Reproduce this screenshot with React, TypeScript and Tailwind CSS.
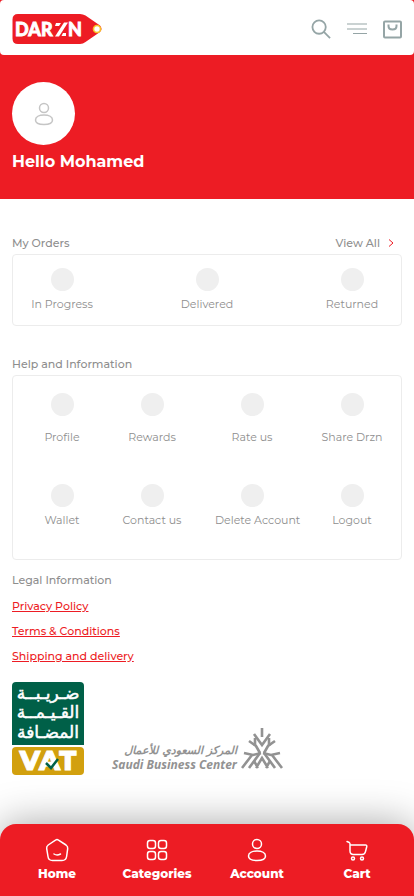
import React from "react";

const orders = ["In Progress", "Delivered", "Returned"];
const help = ["Profile", "Rewards", "Rate us", "Share Drzn"];
const account = ["Wallet", "Contact us", "Delete Account", "Logout"];
const legal = ["Privacy Policy", "Terms & Conditions", "Shipping and delivery"];

function Logo() {
  return (
    <svg width="91" height="31" viewBox="0 0 91 31" role="img" aria-label="Darzn">
      <path
        d="M6 0H68Q71 0 73.500 1.500L88 11.500Q91 15 88 18L73.500 28Q71 30 68 30H6Q0.500 30 0.500 24.500V5.500Q0.500 0 6 0Z"
        fill="#ed1c24"
      />
      <circle cx="85" cy="15" r="3.500" fill="#fff" stroke="#f8c325" strokeWidth="1.600" />
      <g fill="#fff" stroke="#fff" strokeWidth="0.800" fontFamily="Lato, sans-serif" fontWeight="900" fontSize="18">
        <text x="3" y="22">DAR</text>
        <text x="56" y="22">N</text>
      </g>
      <g fill="#fff">
        <path d="M44 9H49L47 12H43Z" />
        <path d="M52 8.500H56L47 22.500H43Z" />
        <path d="M51 19H54V22H49.500Z" />
      </g>
    </svg>
  );
}

function UserIcon({ size }: { size: number }) {
  return (
    <svg width={size} height={size} viewBox="0 0 24 24" fill="none" stroke="currentColor" strokeWidth="1.500" aria-hidden="true">
      <circle cx="12" cy="6" r="4.500" />
      <path d="M12 13C17 13 20.500 15 20.500 18C20.500 21.500 17.500 22.500 12 22.500S3.500 21.500 3.500 18C3.500 15 7 13 12 13Z" />
    </svg>
  );
}

function HomeIcon() {
  return (
    <svg width="24" height="24" viewBox="0 0 24 24" fill="none" stroke="currentColor" strokeWidth="1.500" strokeLinecap="round" strokeLinejoin="round" aria-hidden="true">
      <path d="M10.500 2.100Q12 1 13.500 2.100L21 7Q23 8.400 22.700 10.600L21.600 18.500Q21 22.500 17 22.500H7.500Q3.500 22.500 3 18.500L1.700 10.600Q1.300 8.400 3.200 7Z" />
      <path d="M9 16Q12 18 15.500 16" />
    </svg>
  );
}

function GridIcon() {
  return (
    <svg width="24" height="24" viewBox="0 0 24 24" fill="none" stroke="currentColor" strokeWidth="1.500" aria-hidden="true">
      <rect x="2.500" y="2.500" width="8" height="8" rx="2.500" />
      <rect x="13.500" y="2.500" width="8" height="8" rx="2.500" />
      <rect x="2.500" y="13.500" width="8" height="8" rx="2.500" />
      <rect x="13.500" y="13.500" width="8" height="8" rx="2.500" />
    </svg>
  );
}

function CartIcon() {
  return (
    <svg width="24" height="24" viewBox="0 0 24 24" fill="none" stroke="currentColor" strokeWidth="1.500" strokeLinecap="round" strokeLinejoin="round" aria-hidden="true">
      <path d="M2 3.500L4.300 4.500Q5 5 5 6V13Q5 16.500 8.500 16.500H17Q20 16.500 20.500 13.500L21.800 8.500Q22 7 20.500 7H5" />
      <circle cx="8" cy="20.500" r="1.500" />
      <circle cx="17" cy="20.500" r="1.500" />
    </svg>
  );
}

function Tile({ label, gap }: { label: string; gap: string }) {
  return (
    <button type="button" className={`flex flex-col items-center whitespace-nowrap ${gap}`}>
      <span className="size-[23px] rounded-full bg-[#efefef]" />
      <span className="w-[74px] text-center">{label}</span>
    </button>
  );
}

function VatBadge() {
  return (
    <div className="flex w-[72px] flex-col gap-[2px]">
      <svg width="72" height="63" viewBox="0 0 72 63" role="img" aria-label="ضريبة القيمة المضافة" className="overflow-visible">
        <path d="M4 0H68Q72 0 72 4V63H0V4Q0 0 4 0Z" fill="#006048" />
        <g fill="#fff" stroke="#fff" strokeWidth="0.500" fontFamily="'DejaVu Sans', sans-serif" fontSize="17" textAnchor="middle" direction="rtl">
          <text x="36" y="17">ضـريـبــة</text>
          <text x="36" y="36">القـيـمــة</text>
          <text x="36" y="56">المضـافة</text>
        </g>
      </svg>
      <svg width="72" height="28" viewBox="0 0 72 28" role="img" aria-label="VAT" className="overflow-visible">
        <rect width="72" height="28" rx="4" fill="#d2a00e" />
        <text x="36" y="23" textAnchor="middle" fill="#fff" stroke="#fff" strokeWidth="0.800" fontFamily="Montserrat, 'Open Sans', sans-serif" fontWeight="800" fontSize="27">VAT</text>
        <path d="M34 16L39 21L46 12" fill="none" stroke="#006048" strokeWidth="2.500" />
      </svg>
    </div>
  );
}

function BusinessCenter() {
  return (
    <div className="flex items-end gap-1 pb-[3px] text-[#929292]">
      <div className="flex flex-col items-end whitespace-nowrap font-bold italic leading-[14px]">
        <span dir="rtl" lang="ar" className="font-['DejaVu_Sans',sans-serif] text-[11px]">المركز السعودي للأعمال</span>
        <span className="font-['Noto_Sans','DejaVu_Sans',sans-serif] text-[12px]">Saudi Business Center</span>
      </div>
      <svg width="43" height="42" viewBox="0 0 43 42" fill="none" stroke="currentColor" strokeWidth="2.600" aria-hidden="true" className="mb-[2px]">
        <path d="M21 0V9" />
        <path d="M13 6L21 17L29 6" />
        <path d="M8 13L15 18L19 25M34 13L27 18L23 25" />
        <path d="M14 10V18M28 10V18" />
        <path d="M3 25L12 27L20 25M39 25L30 27L22 25" />
        <path d="M1 40L11 27M41 40L31 27" />
        <path d="M8 40L19 25M34 40L23 25" />
        <path d="M15 40L21 30L27 40M13 33L17 40M29 33L25 40" />
      </svg>
    </div>
  );
}

const tabs = [
  { label: "Home", icon: <HomeIcon /> },
  { label: "Categories", icon: <GridIcon /> },
  { label: "Account", icon: <UserIcon size={24} /> },
  { label: "Cart", icon: <CartIcon /> },
];

export default function App() {
  return (
    <div className="flex min-h-screen flex-col bg-white font-['Montserrat','Inter',sans-serif] text-[11px] leading-4 text-[#8e8e8e]">
      <div className="bg-[#ed1c24]">
        <header className="flex h-[55px] items-center justify-between rounded-[4px] bg-white px-3 pt-[3px]">
          <a href="#home"><Logo /></a>
          <div className="flex items-center gap-4 text-[#95a5a6]">
            <button type="button" aria-label="Search">
              <svg width="20" height="20" viewBox="0 0 21 21" fill="none" stroke="currentColor" strokeWidth="1.900">
                <circle cx="8.500" cy="8.500" r="7" />
                <path d="M13.500 13.500L20 20" />
              </svg>
            </button>
            <button type="button" aria-label="Menu">
              <svg width="20" height="20" viewBox="0 0 20 20" fill="none" stroke="currentColor" strokeWidth="1.200">
                <path d="M0 5H20M0 10H20M6 14.500H20" />
              </svg>
            </button>
            <button type="button" aria-label="Bag">
              <svg width="19" height="19" viewBox="0 0 19 19" fill="none" stroke="currentColor" strokeWidth="2">
                <rect x="1" y="1.500" width="17" height="16" rx="1" />
                <path d="M5.500 4.500V6Q5.500 9.500 9.500 9.500T13.500 6V4.500" />
              </svg>
            </button>
          </div>
        </header>
        <section className="flex h-36 flex-col px-3 pt-[27px] text-white">
          <div className="flex size-[63px] items-center justify-center rounded-full bg-white text-[#c5c5c5]">
            <UserIcon size={24} />
          </div>
          <h1 className="mt-[5px] text-[16px] font-bold leading-6">Hello Mohamed</h1>
        </section>
      </div>

      <main className="flex flex-col px-3 pt-9">
        <div className="flex justify-between pr-2">
          <h2 className="font-medium">My Orders</h2>
          <a href="#orders" className="flex items-center gap-2 font-medium">
            View All
            <svg width="6" height="8" viewBox="0 0 6 8" fill="none" stroke="#ed1c24" aria-hidden="true">
              <path d="M1 0.500L5 4L1 7.500" />
            </svg>
          </a>
        </div>
        <div className="mt-[3px] grid h-[72px] grid-cols-[9fr_20fr_9fr] items-start rounded-[4px] border border-[#ececec] px-1 pt-[13px]">
          {orders.map((label) => <Tile key={label} label={label} gap="gap-[5px]" />)}
        </div>

        <h2 className="mt-[30px] font-medium">Help and Information</h2>
        <div className="mt-[3px] flex h-[185px] flex-col gap-[39px] rounded-[4px] border border-[#ececec] px-1 pt-[17px]">
          <div className="grid grid-cols-[9fr_9fr_11fr_9fr]">
            {help.map((label) => <Tile key={label} label={label} gap="gap-[13px]" />)}
          </div>
          <div className="grid grid-cols-[9fr_9fr_11fr_9fr]">
            {account.map((label) => <Tile key={label} label={label} gap="gap-[5px]" />)}
          </div>
        </div>

        <h2 className="mt-3 font-medium">Legal Information</h2>
        <ul className="mt-[6px] font-medium leading-[25px] text-[#ed1c24]">
          {legal.map((label) => (
            <li key={label}><a href="#legal" className="underline">{label}</a></li>
          ))}
        </ul>
        <div className="mt-[13px] flex items-end gap-7">
          <VatBadge />
          <BusinessCenter />
        </div>
      </main>

      <nav className="sticky bottom-0 mt-auto grid h-[72px] grid-cols-4 rounded-t-[16px] bg-[#ed1c24] px-[7px] pt-[14px] text-[12px] font-extrabold text-white shadow-[0_0_40px_rgba(0,0,0,0.36)]">
        {tabs.map((tab) => (
          <a key={tab.label} href={`#${tab.label}`} className="flex flex-col items-center gap-1">
            {tab.icon}
            {tab.label}
          </a>
        ))}
      </nav>
    </div>
  );
}
